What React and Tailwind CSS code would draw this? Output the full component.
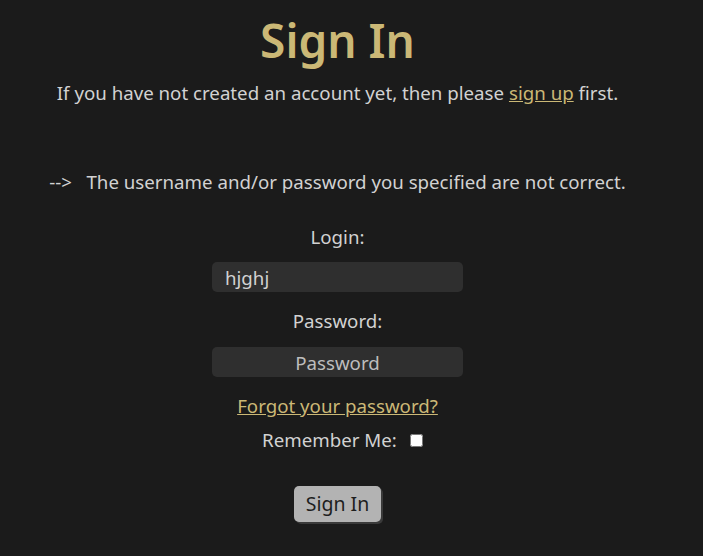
import React from 'react';

export default function App() {
  return (
    <div className="min-h-screen w-full bg-[#1b1b1b] text-[#d2d2d2]" style={{ fontFamily: '"Noto Sans", "Open Sans", sans-serif' }}>
      <div className="w-[675px] flex flex-col items-center text-[18.7px]">
        <h1 className="mt-[12px] text-[46px] leading-[56px] font-semibold text-[#cbb876]">Sign In</h1>
        <p className="mt-[12px] leading-[26px]">
          If you have not created an account yet, then please{' '}
          <a href="#" className="text-[#cbb876] underline">sign up</a> first.
        </p>
        <p className="mt-[63px] leading-[26px]">--&gt;&nbsp;&nbsp; The username and/or password you specified are not correct.</p>
        <form className="mt-[29px] flex flex-col items-center">
          <label className="leading-[26px]">Login:</label>
          <input
            defaultValue="hjghj"
            className="mt-[12px] w-[251px] h-[30px] rounded-[5px] bg-[#2f2f2f] px-[13px] text-[#d2d2d2] outline-none"
          />
          <label className="mt-[16px] leading-[26px]">Password:</label>
          <input
            type="password"
            placeholder="Password"
            className="mt-[13px] w-[251px] h-[30px] rounded-[5px] bg-[#2f2f2f] px-[13px] text-center text-[#d2d2d2] placeholder:text-[#bdbdbd] outline-none"
          />
          <a href="#" className="mt-[16px] leading-[26px] text-[#cbb876] underline">Forgot your password?</a>
          <div className="mt-[8px] ml-[10px] flex items-center gap-[13px] leading-[26px]">
            <span>Remember Me:</span>
            <input type="checkbox" className="w-[13px] h-[13px]" />
          </div>
          <button
            type="button"
            className="mt-[33px] w-[87px] h-[36px] rounded-[5px] bg-[#b3b3b3] text-[19.5px] text-[#1e1e1e] shadow-[2px_2px_0_#3a3a3a]"
          >
            Sign In
          </button>
        </form>
      </div>
    </div>
  );
}
